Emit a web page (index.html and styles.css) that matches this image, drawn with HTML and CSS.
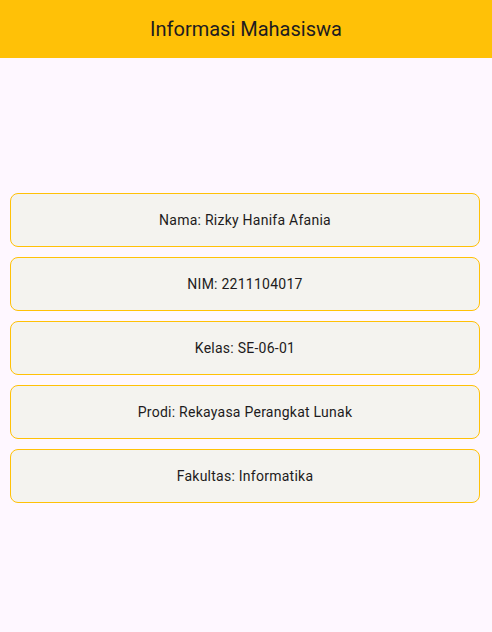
FILE: index.html
```html
<!DOCTYPE html>
<html lang="id">
<head>
<meta charset="utf-8">
<title>Informasi Mahasiswa</title>
<link rel="stylesheet" href="styles.css">
</head>
<body>
<header class="appbar">
  <h1 class="title">Informasi Mahasiswa</h1>
</header>
<main class="content">
  <div class="card">Nama: Rizky Hanifa Afania</div>
  <div class="card">NIM: 2211104017</div>
  <div class="card">Kelas: SE-06-01</div>
  <div class="card">Prodi: Rekayasa Perangkat Lunak</div>
  <div class="card">Fakultas: Informatika</div>
</main>
</body>
</html>
```
FILE: styles.css
```css
html, body {
  margin: 0;
  padding: 0;
  height: 100%;
}
body {
  background: #FEF7FF;
  font-family: Roboto, "Liberation Sans", sans-serif;
  color: #1D1B20;
  display: flex;
  flex-direction: column;
}
.appbar {
  height: 58px;
  background: #FFC107;
  display: flex;
  align-items: center;
  justify-content: center;
  flex-shrink: 0;
}
.title {
  margin: 0;
  font-size: 20px;
  font-weight: 400;
  color: #1D1B20;
  line-height: 1;
}
.content {
  flex: 1;
  display: flex;
  flex-direction: column;
  justify-content: center;
  gap: 10px;
  padding: 6px 12px 0 10px;
}
.card {
  height: 52px;
  border: 1px solid #FFC107;
  border-radius: 8px;
  background: #F4F3EF;
  display: flex;
  align-items: center;
  justify-content: center;
  font-size: 14px;
  letter-spacing: 0.25px;
}
```
